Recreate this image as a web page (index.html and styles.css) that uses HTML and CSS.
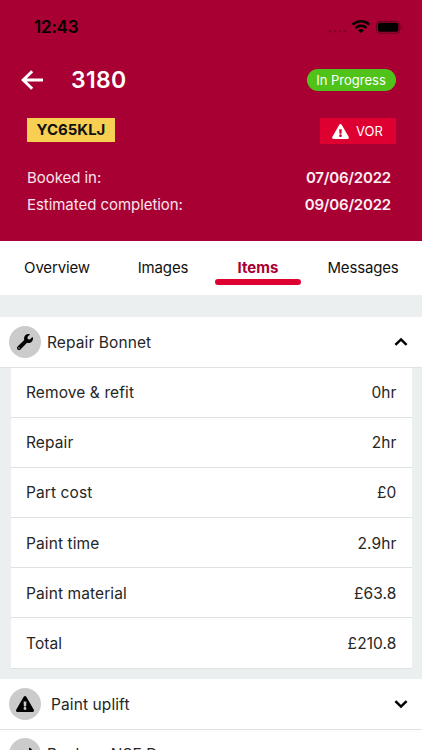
FILE: index.html
```html
<!DOCTYPE html>
<html lang="en">
<head>
<meta charset="utf-8">
<title>3180</title>
<link rel="stylesheet" href="styles.css">
</head>
<body>
<svg class="defs" width="0" height="0">
  <symbol id="wrench" viewBox="0 0 512 512"><path d="M507.73 109.1c-2.24-9.03-13.54-12.09-20.12-5.51l-74.36 74.36-67.88-11.31-11.31-67.88 74.36-74.36c6.62-6.62 3.43-17.9-5.66-20.16-47.38-11.74-99.55.91-136.58 37.93-39.64 39.64-50.55 97.1-34.05 147.2L18.74 402.76c-24.99 24.99-24.99 65.51 0 90.5 24.99 24.99 65.51 24.99 90.5 0l213.21-213.21c50.12 16.71 107.47 5.68 147.37-34.22 37.07-37.07 49.7-89.32 37.91-136.73zM64 472c-13.25 0-24-10.75-24-24 0-13.26 10.75-24 24-24s24 10.74 24 24c0 13.25-10.75 24-24 24z"/></symbol>
  <symbol id="warning" viewBox="0 0 576 512"><path d="M569.517 440.013C587.975 472.007 564.806 512 527.94 512H48.054c-36.937 0-59.999-40.055-41.577-71.987L246.423 23.985c18.467-32.009 64.72-31.951 83.154 0l239.94 416.028zM288 354c-25.405 0-46 20.595-46 46s20.595 46 46 46 46-20.595 46-46-20.595-46-46-46zm-43.673-165.346l7.418 136c.347 6.364 5.609 11.346 11.982 11.346h48.546c6.373 0 11.635-4.982 11.982-11.346l7.418-136c.375-6.874-5.098-12.654-11.982-12.654h-63.383c-6.884 0-12.356 5.78-11.981 12.654z"/></symbol>
  <symbol id="exchange" viewBox="0 0 512 512"><path d="M0 168v-16c0-13.255 10.745-24 24-24h360V80c0-21.367 25.899-32.042 40.971-16.971l80 80c9.372 9.373 9.372 24.569 0 33.941l-80 80C409.956 271.982 384 261.456 384 240v-48H24c-13.255 0-24-10.745-24-24zm488 152H128v-48c0-21.314-25.862-32.08-40.971-16.971l-80 80c-9.372 9.373-9.372 24.569 0 33.941l80 80C102.057 463.997 128 453.437 128 432v-48h360c13.255 0 24-10.745 24-24v-16c0-13.255-10.745-24-24-24z"/></symbol>
</svg>
<header class="header">
  <div class="status">
    <span class="clock">12:43</span>
    <svg class="indicators" width="76" height="16" viewBox="0 0 76 16">
      <g fill="#000" opacity=".22"><circle cx="4" cy="12.3" r="1.2"/><circle cx="9" cy="12.3" r="1.2"/><circle cx="14" cy="12.3" r="1.2"/><circle cx="19" cy="12.3" r="1.2"/></g>
      <g fill="none" stroke="#000" stroke-width="2.3"><path d="M26.7 5.6a12 12 0 0 1 16.6 0"/><path d="M29.6 8.9a7.8 7.8 0 0 1 10.8 0"/></g>
      <path d="M32.1 11.3a4.2 4.2 0 0 1 5.8 0L35 14.2z"/>
      <rect x="50.6" y="2.4" width="23.2" height="11.8" rx="3.3" fill="none" stroke="#000" stroke-opacity=".4"/>
      <rect x="52" y="3.8" width="20.4" height="9" rx="1.8"/>
      <path d="M75 6.4q1.3.5 1.3 1.9T75 10.2z" opacity=".45"/>
    </svg>
  </div>
  <div class="titlebar">
    <svg class="back" width="22" height="20" viewBox="0 0 22 20"><path d="M11.2 1.2 2.2 10l9 8.8M2.2 10H22" fill="none" stroke="#fff" stroke-width="3"/></svg>
    <h1 class="title">3180</h1>
    <span class="pill">In Progress</span>
  </div>
  <div class="tags">
    <span class="plate">YC65KLJ</span>
    <span class="vor"><svg width="17" height="15"><use href="#warning"/></svg><span>VOR</span></span>
  </div>
  <dl class="dates">
    <div><dt>Booked in:</dt><dd>07/06/2022</dd></div>
    <div><dt>Estimated completion:</dt><dd>09/06/2022</dd></div>
  </dl>
</header>
<nav class="tabs">
  <span class="tab">Overview</span>
  <span class="tab">Images</span>
  <span class="tab active">Items</span>
  <span class="tab">Messages</span>
</nav>
<main>
  <section class="item">
    <span class="badge"><svg width="16" height="16"><use href="#wrench"/></svg></span>
    <span class="name">Repair Bonnet</span>
    <svg class="chevron" width="14" height="10" viewBox="0 0 14 10"><path d="M1.4 7.9 7 2.4l5.6 5.5"/></svg>
  </section>
  <div class="details">
    <div class="row"><span>Remove &amp; refit</span><span>0hr</span></div>
    <div class="row"><span>Repair</span><span>2hr</span></div>
    <div class="row"><span>Part cost</span><span>£0</span></div>
    <div class="row"><span>Paint time</span><span>2.9hr</span></div>
    <div class="row"><span>Paint material</span><span>£63.8</span></div>
    <div class="row"><span>Total</span><span>£210.8</span></div>
  </div>
  <section class="item">
    <span class="badge"><svg width="18" height="16"><use href="#warning"/></svg></span>
    <span class="name wide">Paint uplift</span>
    <svg class="chevron" width="14" height="10" viewBox="0 0 14 10"><path d="M1.4 2.1 7 7.6l5.6-5.5"/></svg>
  </section>
  <section class="item">
    <span class="badge"><svg width="16" height="16"><use href="#exchange"/></svg></span>
    <span class="name">Replace NSF D</span>
  </section>
</main>
</body>
</html>
```
FILE: styles.css
```css
* { box-sizing: border-box; }
body {
  margin: 0;
  width: 422px;
  height: 750px;
  overflow: hidden;
  background: #ebeff0;
  color: #262626;
  font: 15px/20px Inter, "Liberation Sans", sans-serif;
}
.defs { display: block; }
.header { height: 241px; background: #a80032; color: #fff; }
.status {
  display: flex;
  justify-content: space-between;
  align-items: center;
  height: 54px;
  padding: 0 20px 0 34px;
  color: #000;
}
.clock { font-size: 17px; font-weight: 600; letter-spacing: -0.2px; }
.titlebar { display: flex; align-items: center; height: 51px; padding: 0 26px 0 21px; }
.title { margin: 0 auto 0 28px; font-size: 23px; font-weight: 600; line-height: 30px; letter-spacing: 0.3px; }
.pill {
  width: 89px;
  height: 22px;
  padding-right: 1px;
  border-radius: 11px;
  background: #50c31b;
  text-align: center;
  font-size: 13px;
  line-height: 22px;
}
.tags { display: flex; justify-content: space-between; height: 59px; padding: 13px 26px 0 27px; }
.plate {
  width: 88px;
  height: 24px;
  background: #f8cf52;
  color: #111;
  text-align: center;
  font-weight: 700;
  line-height: 24px;
}
.vor {
  display: flex;
  align-items: center;
  gap: 7px;
  width: 76px;
  height: 26px;
  padding-left: 12px;
  background: #df0032;
  font-size: 13px;
}
.vor svg { fill: #fff; }
.dates { margin: 0; padding: 0 31px 0 27px; }
.dates div { display: flex; justify-content: space-between; height: 27px; line-height: 27px; }
.dates dt { color: #fbe3ec; letter-spacing: -0.05px; }
.dates dd { margin: 0; color: #fdeff4; font-weight: 600; letter-spacing: -0.2px; }
.tabs {
  display: grid;
  grid-template-columns: 114px 98px 92px 118px;
  height: 54px;
  background: #fff;
  color: #111;
}
.tab { padding-top: 17px; text-align: center; letter-spacing: -0.15px; }
.active { color: #a80032; font-weight: 700; letter-spacing: 0; }
.active::after {
  content: "";
  display: block;
  width: 86px;
  height: 6px;
  margin: 1px auto 0;
  border-radius: 3px;
  background: #df0032;
}
main { padding-top: 22px; }
.item {
  display: flex;
  align-items: center;
  height: 50.5px;
  padding: 0 14px 0 9px;
  border-bottom: 1px solid #e0e2e3;
  background: #fff;
}
.badge {
  display: flex;
  align-items: center;
  justify-content: center;
  width: 32px;
  height: 32px;
  border-radius: 50%;
  background: #cbcbcb;
}
.badge svg { fill: #000; }
.name { margin: 0 auto 0 6px; padding-top: 2px; font-size: 15.5px; letter-spacing: 0.1px; }
.wide { margin-left: 10px; }
.chevron { fill: none; stroke: #000; stroke-width: 2.5; }
.details { margin: 0 10px 10.5px 11px; }
.row {
  display: flex;
  justify-content: space-between;
  align-items: center;
  height: 50.2px;
  padding: 2px 15.5px 0 15px;
  border-bottom: 1px solid #dfe1e2;
  background: #fff;
  font-size: 15.5px;
  letter-spacing: 0.1px;
}
```
